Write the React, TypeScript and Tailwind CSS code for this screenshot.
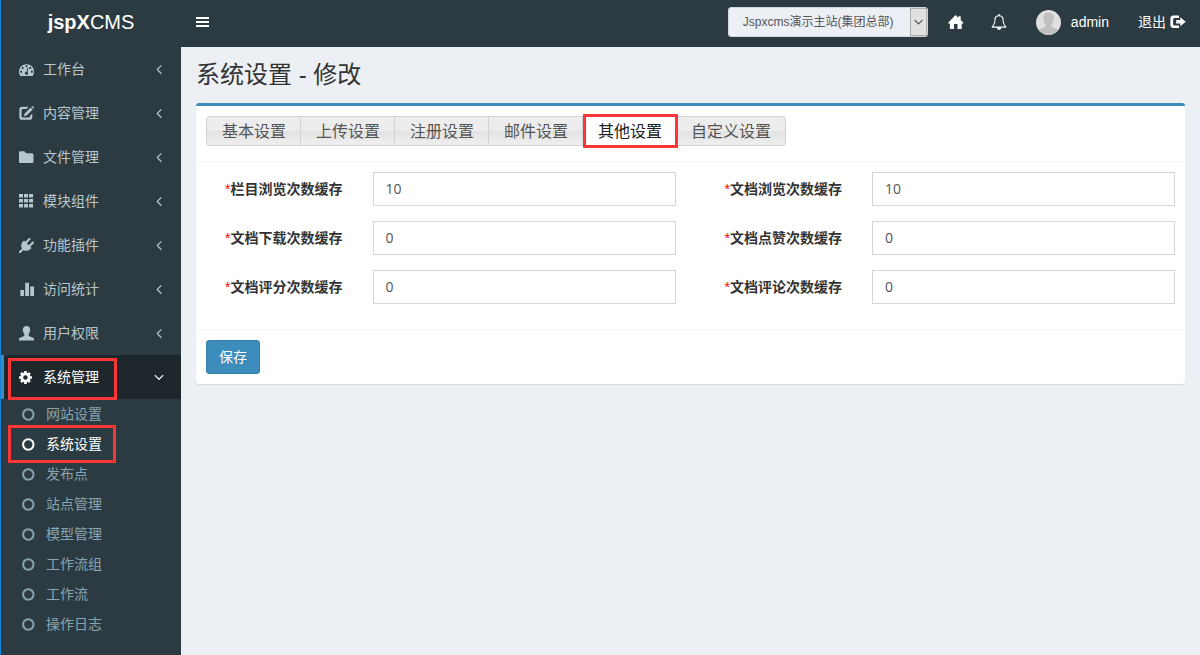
import { useState } from 'react';
import type { ReactNode } from 'react';

const FONT = "font-['Liberation_Sans','Noto_Sans_CJK_SC',sans-serif]";

// 图标
function FaIcon({ d, className = 'size-[15px]' }: { d: string; className?: string }) {
  return (
    <svg viewBox="0 0 1792 1792" fill="currentColor" className={className} aria-hidden="true">
      <path d={d} />
    </svg>
  );
}

function Glyph({ children, className = 'size-[15px]' }: { children: ReactNode; className?: string }) {
  return (
    <svg viewBox="0 0 14 14" fill="currentColor" className={className} aria-hidden="true">
      {children}
    </svg>
  );
}

const DASHBOARD =
  'M384 1152q0-53-37.5-90.5t-90.5-37.5-90.5 37.5-37.5 90.5 37.5 90.5 90.5 37.5 90.5-37.5 37.5-90.5zm192-448q0-53-37.5-90.5t-90.5-37.5-90.5 37.5-37.5 90.5 37.5 90.5 90.5 37.5 90.5-37.5 37.5-90.5zm428 481l101-382q6-26-7.5-48.5t-38.5-29.5-48 6.5-30 39.5l-101 382q-60 5-107 43.5t-63 98.5q-20 77 20 146t117 89 146-20 89-117q16-60-6-117t-72-91zm660-33q0-53-37.5-90.5t-90.5-37.5-90.5 37.5-37.5 90.5 37.5 90.5 90.5 37.5 90.5-37.5 37.5-90.5zm-640-640q0-53-37.5-90.5t-90.5-37.5-90.5 37.5-37.5 90.5 37.5 90.5 90.5 37.5 90.5-37.5 37.5-90.5zm448 192q0-53-37.5-90.5t-90.5-37.5-90.5 37.5-37.5 90.5 37.5 90.5 90.5 37.5 90.5-37.5 37.5-90.5zm320 448q0 261-141 483-19 29-54 29h-1402q-35 0-54-29-141-221-141-483 0-182 71-348t191-286 286-191 348-71 348 71 286 191 191 286 71 348z';
const PLUG =
  'M1755 453q37 38 37 90.5t-37 90.5l-401 400 150 150-160 160q-163 163-389.5 186.5t-411.5-100.5l-362 362h-181v-181l362-362q-124-185-100.5-411.5t186.5-389.5l160-160 150 150 400-401q38-37 91-37t90 37 37 90.5-37 90.5l-400 401 234 234 401-400q38-37 91-37t90 37z';
const BELL =
  'M912 1696q0-16-16-16-59 0-101.5-42.5t-42.5-101.5q0-16-16-16t-16 16q0 73 51.5 124.5t124.5 51.5q16 0 16-16zm-666-288h1300q-266-300-266-832 0-51-24-105t-69-103-121.5-80.5-169.5-31.5-169.5 31.5-121.5 80.5-69 103-24 105q0 532-266 832zm1482 0q0 52-38 90t-90 38h-448q0 106-75 181t-181 75-181-75-75-181h-448q-52 0-90-38t-38-90q50-42 91-88t85-119.5 74.5-158.5 50-206 19.5-260q0-152 117-282.5t307-158.5q-8-19-8-39 0-40 28-68t68-28 68 28 28 68q0 20-8 39 190 28 307 158.5t117 282.5q0 139 19.5 260t50 206 74.5 158.5 85 119.5 91 88z';
const ANGLE_LEFT =
  'M1203 544q0 13-10 23l-393 393 393 393q10 10 10 23t-10 23l-50 50q-10 10-23 10t-23-10l-466-466q-10-10-10-23t10-23l466-466q10-10 23-10t23 10l50 50q10 10 10 23z';
const ANGLE_DOWN =
  'M1395 736q0 13-10 23l-466 466q-10 10-23 10t-23-10l-466-466q-10-10-10-23t10-23l50-50q10-10 23-10t23 10l393 393 393-393q10-10 23-10t23 10l50 50q10 10 10 23z';

const menus = [
  { name: '工作台', icon: <FaIcon d={DASHBOARD} /> },
  {
    name: '内容管理',
    icon: (
      <Glyph>
        <path d="M9 .8H3A2.700 2.700 0 0 0 .3 3.500v6.700A2.700 2.700 0 0 0 3 12.900h6.700a2.700 2.700 0 0 0 2.700-2.700V7L10.300 9v.5a1.200 1.200 0 0 1-1.200 1.200H3.600a1.200 1.200 0 0 1-1.200-1.200V4.100a1.200 1.200 0 0 1 1.200-1.200h3.500z" />
        <path d="M10.900 1.400l1.900 1.900-5.400 5.300-3 1.100 1.100-3zM11.600.8l.7-.6c.2-.2.5-.2.7 0l.9.9c.2.2.2.5 0 .7l-.6.7z" />
      </Glyph>
    ),
  },
  {
    name: '文件管理',
    icon: (
      <Glyph>
        <path d="M0 2.2c0-.6.4-1 1-1h3.8c.5 0 .8.2 1 .6l.6 1.2H12c.9 0 1.5.6 1.5 1.4v6.900c0 .5-.4.9-.9.9H.9c-.5 0-.9-.4-.9-.9z" />
      </Glyph>
    ),
  },
  {
    name: '模块组件',
    icon: (
      <Glyph>
        <path d="M0 0h3.700v3.300H0zM4.700 0h3.700v3.300H4.700zM9.400 0h3.700v3.300H9.400zM0 4.700h3.700v3.200H0zM4.700 4.700h3.700v3.200H4.700zM9.400 4.700h3.700v3.200H9.400zM0 9.300h3.700v3.200H0zM4.700 9.300h3.700v3.200H4.700zM9.400 9.300h3.700v3.200H9.400z" />
      </Glyph>
    ),
  },
  { name: '功能插件', icon: <FaIcon d={PLUG} /> },
  {
    name: '访问统计',
    icon: (
      <Glyph>
        <path d="M1.300 7.500h3.300v5.600H1.300zM5.800.6h3.500v12.500H5.800zM10.500 4.200H14v8.900h-3.500z" />
      </Glyph>
    ),
  },
  {
    name: '用户权限',
    icon: (
      <Glyph>
        <path d="M7 0c2.200 0 3.400 1.400 3.400 3.500 0 1.500-.5 3-1.400 4v1.200c0 .4.2.6.6.8l3.500 1.500c.6.3.9.6.9 1.200v1.300H0v-1.300c0-.6.3-.9.9-1.200l3.500-1.500c.4-.2.6-.4.6-.8V7.500c-.9-1-1.400-2.500-1.400-4C3.600 1.400 4.800 0 7 0z" />
      </Glyph>
    ),
  },
];

const subMenus = ['网站设置', '系统设置', '发布点', '站点管理', '模型管理', '工作流组', '工作流', '操作日志'];

const tabs = ['基本设置', '上传设置', '注册设置', '邮件设置', '其他设置', '自定义设置'];

const fields = [
  { id: 'nodeViews', label: '栏目浏览次数缓存', value: '10' },
  { id: 'infoViews', label: '文档浏览次数缓存', value: '10' },
  { id: 'infoDownloads', label: '文档下载次数缓存', value: '0' },
  { id: 'infoDiggs', label: '文档点赞次数缓存', value: '0' },
  { id: 'infoScore', label: '文档评分次数缓存', value: '0' },
  { id: 'infoComments', label: '文档评论次数缓存', value: '0' },
];

function Sidebar() {
  return (
    <aside className="w-[181px] shrink-0 border-l border-[#1282dc] bg-[#2c3b41] text-sm">
      <a href="#" className="flex h-[47px] items-center justify-center pb-1 text-xl text-white">
        <span>
          <b>jspX</b>CMS
        </span>
      </a>
      <nav>
        {menus.map((menu) => (
          <a key={menu.name} href="#" className="flex h-11 items-center pr-3.5 pl-[18px] text-[#b8c7ce]">
            {menu.icon}
            <span className="ml-[9px] flex-1">{menu.name}</span>
            <FaIcon d={ANGLE_LEFT} className="size-4" />
          </a>
        ))}
        <a href="#" className="relative flex h-11 items-center border-l-[3px] border-[#3c8dbc] bg-[#1e282c] pr-3.5 pl-[15px] text-white">
          <Glyph>
            {/* 齿轮: 圆环加八个齿 */}
            <circle cx="6" cy="7" r="3.4" fill="none" stroke="currentColor" strokeWidth="2.6" />
            <g stroke="currentColor" strokeWidth="2.4">
              <path d="M6 .9v3M6 10.100v3M-.1 7h3M9.100 7h3" />
              <path d="M1.800 2.800l2 2M8.200 9.200l2 2M10.200 2.800l-2 2M3.800 9.200l-2 2" />
            </g>
          </Glyph>
          <span className="ml-[9px] flex-1">系统管理</span>
          <FaIcon d={ANGLE_DOWN} className="size-4" />
          <span className="pointer-events-none absolute top-[3px] left-1 h-[42px] w-[109px] border-3 border-[#fb3636]" />
        </a>
        <ul>
          {subMenus.map((name) => {
            const active = name === '系统设置';
            return (
              <li key={name} className="relative">
                <a href="#" className={'flex h-[30px] items-center pl-[21px] ' + (active ? 'text-white' : 'text-[#8aa4af]')}>
                  <svg viewBox="0 0 13 13" className="size-[13px]" fill="none" stroke="currentColor" strokeWidth="2">
                    <circle cx="6.3" cy="6.5" r="5.200" />
                  </svg>
                  <span className="ml-[11px]">{name}</span>
                </a>
                {active && (
                  <span className="pointer-events-none absolute -top-1 left-[7px] h-[38px] w-[108px] border-3 border-[#fb3636]" />
                )}
              </li>
            );
          })}
        </ul>
      </nav>
    </aside>
  );
}

function Header() {
  return (
    <header className="flex h-[47px] items-center bg-[#2c3b41] pr-3.5 pb-[3px] pl-[15px] text-sm text-white">
      <button type="button" aria-label="菜单">
        <Glyph className="size-3.5">
          <path d="M0 2h13v2H0zM0 6h13v2H0zM0 10h13v2H0z" />
        </Glyph>
      </button>
      <div className="relative ml-auto">
        <select
          aria-label="站点"
          className="block h-[30px] w-[200px] appearance-none rounded-[3px] border border-[#d2d6de] bg-[#ecf0f5] pr-5 pl-3.5 text-xs text-[#555]"
        >
          <option>Jspxcms演示主站(集团总部)</option>
        </select>
        <span className="pointer-events-none absolute top-px right-px flex h-7 w-[17px] items-center justify-center border border-[#adadad] bg-[#e1e1e1]">
          <svg viewBox="0 0 9 6" className="h-1.5 w-[9px]" fill="none" stroke="#555" strokeWidth="1.2">
            <path d="M.5 .8l4 4 4-4" />
          </svg>
        </span>
      </div>
      <a href="#" aria-label="首页" className="ml-5">
        <svg viewBox="0 0 16 15" fill="currentColor" className="h-[15px] w-4">
          <path d="M7.500 0l2.800 2.700V1.200h2.400v3.700L15.600 8v.6h-1.900V14H9.500V9H6v5H1.900V8.600H0V8z" />
        </svg>
      </a>
      <a href="#" aria-label="消息" className="ml-[27px]">
        <FaIcon d={BELL} className="size-4" />
      </a>
      <a href="#" className="ml-[29px] flex items-center">
        <svg viewBox="0 0 25 25" className="size-[25px] rounded-full">
          <rect width="25" height="25" fill="#e0e0e0" />
          <path
            fill="#c0c0c0"
            d="M12.500 2.500c3.500 0 5.200 2.300 5.200 5.500 0 2.500-.8 4.800-2.300 6.200v1.600c0 .8.400 1.200 1.200 1.500l4 1.500c1.300.5 2.200 1.200 2.900 2.200V25h-22v-4c.7-1 1.600-1.700 2.900-2.200l4-1.500c.8-.3 1.200-.7 1.200-1.500v-1.600C8.100 12.800 7.300 10.500 7.300 8c0-3.200 1.700-5.500 5.200-5.500z"
          />
        </svg>
        <span className="ml-2.5">admin</span>
      </a>
      <a href="#" className="ml-[29px] flex items-center gap-1">
        退出
        <svg viewBox="0 0 16 14" fill="currentColor" className="h-3.5 w-4">
          <path d="M9 .4H3.600A3.200 3.200 0 0 0 .4 3.600v6.200A3.200 3.200 0 0 0 3.600 13H9v-2.500H4.600A1.500 1.500 0 0 1 3.100 9V4.400a1.500 1.500 0 0 1 1.500-1.500H9z" />
          <path d="M10.300 2.200l5.400 4.500-5.400 4.500V8.400H6.200V5h4.100z" />
        </svg>
      </a>
    </header>
  );
}

export default function App() {
  const [values, setValues] = useState<Record<string, string>>(
    Object.fromEntries(fields.map((f) => [f.id, f.value]))
  );

  return (
    <div className={'flex min-h-screen bg-[#ecf0f5] text-[#333] ' + FONT}>
      <Sidebar />
      <div className="min-w-0 flex-1">
        <Header />
        <main className="px-[15px] pt-3">
          <h1 className="text-2xl leading-8">系统设置 - 修改</h1>

          <form className="mt-3 rounded-[3px] border-t-[3px] border-[#3c8dbc] bg-white shadow-[0_1px_1px_rgba(0,0,0,0.1)]">
            {/* 设置分类 */}
            <div className="flex border-b border-[#f4f4f4] px-2.5 pt-2.5 pb-[15px]">
              {tabs.map((tab) => {
                const active = tab === '其他设置';
                return (
                  <button
                    key={tab}
                    type="button"
                    className={
                      'relative h-[30px] border-y border-r border-[#d3d3d3] pt-0.5 pr-3.5 pl-[15px] text-base leading-6 whitespace-nowrap first:rounded-l first:border-l last:rounded-r last:pl-3.5 ' +
                      (active
                        ? 'z-10 bg-white text-[#212121]'
                        : 'bg-[linear-gradient(#ededed_0%,#ececec_50%,#e2e2e2_50%,#efefef_100%)] text-[#555]')
                    }
                  >
                    {tab}
                    {active && (
                      <span className="pointer-events-none absolute -inset-y-[3px] -right-0.5 left-0 border-3 border-[#fb3636]" />
                    )}
                  </button>
                );
              })}
            </div>

            {/* 缓存次数 */}
            <div className="p-2.5">
              <div className="-mx-[15px] grid grid-cols-2">
                {fields.map((field) => (
                  <div key={field.id} className="mb-[15px] flex items-center text-sm">
                    <label htmlFor={field.id} className="w-1/3 px-[15px] text-right font-bold whitespace-nowrap">
                      <span className="font-normal text-[#f00]">*</span>
                      {field.label}
                    </label>
                    <div className="w-2/3 px-[15px]">
                      <input
                        id={field.id}
                        type="text"
                        value={values[field.id]}
                        onChange={(e) => setValues({ ...values, [field.id]: e.target.value })}
                        className="block h-[34px] w-full border border-[#d2d6de] bg-white px-3 pb-0.5 font-['Open_Sans',sans-serif] text-[#555]"
                      />
                    </div>
                  </div>
                ))}
              </div>
            </div>

            <div className="border-t border-[#f4f4f4] p-2.5">
              <button
                type="button"
                className="block h-[34px] rounded-[3px] border border-[#367fa9] bg-[#3c8dbc] px-3 text-sm text-white"
              >
                保存
              </button>
            </div>
          </form>
        </main>
      </div>
    </div>
  );
}
